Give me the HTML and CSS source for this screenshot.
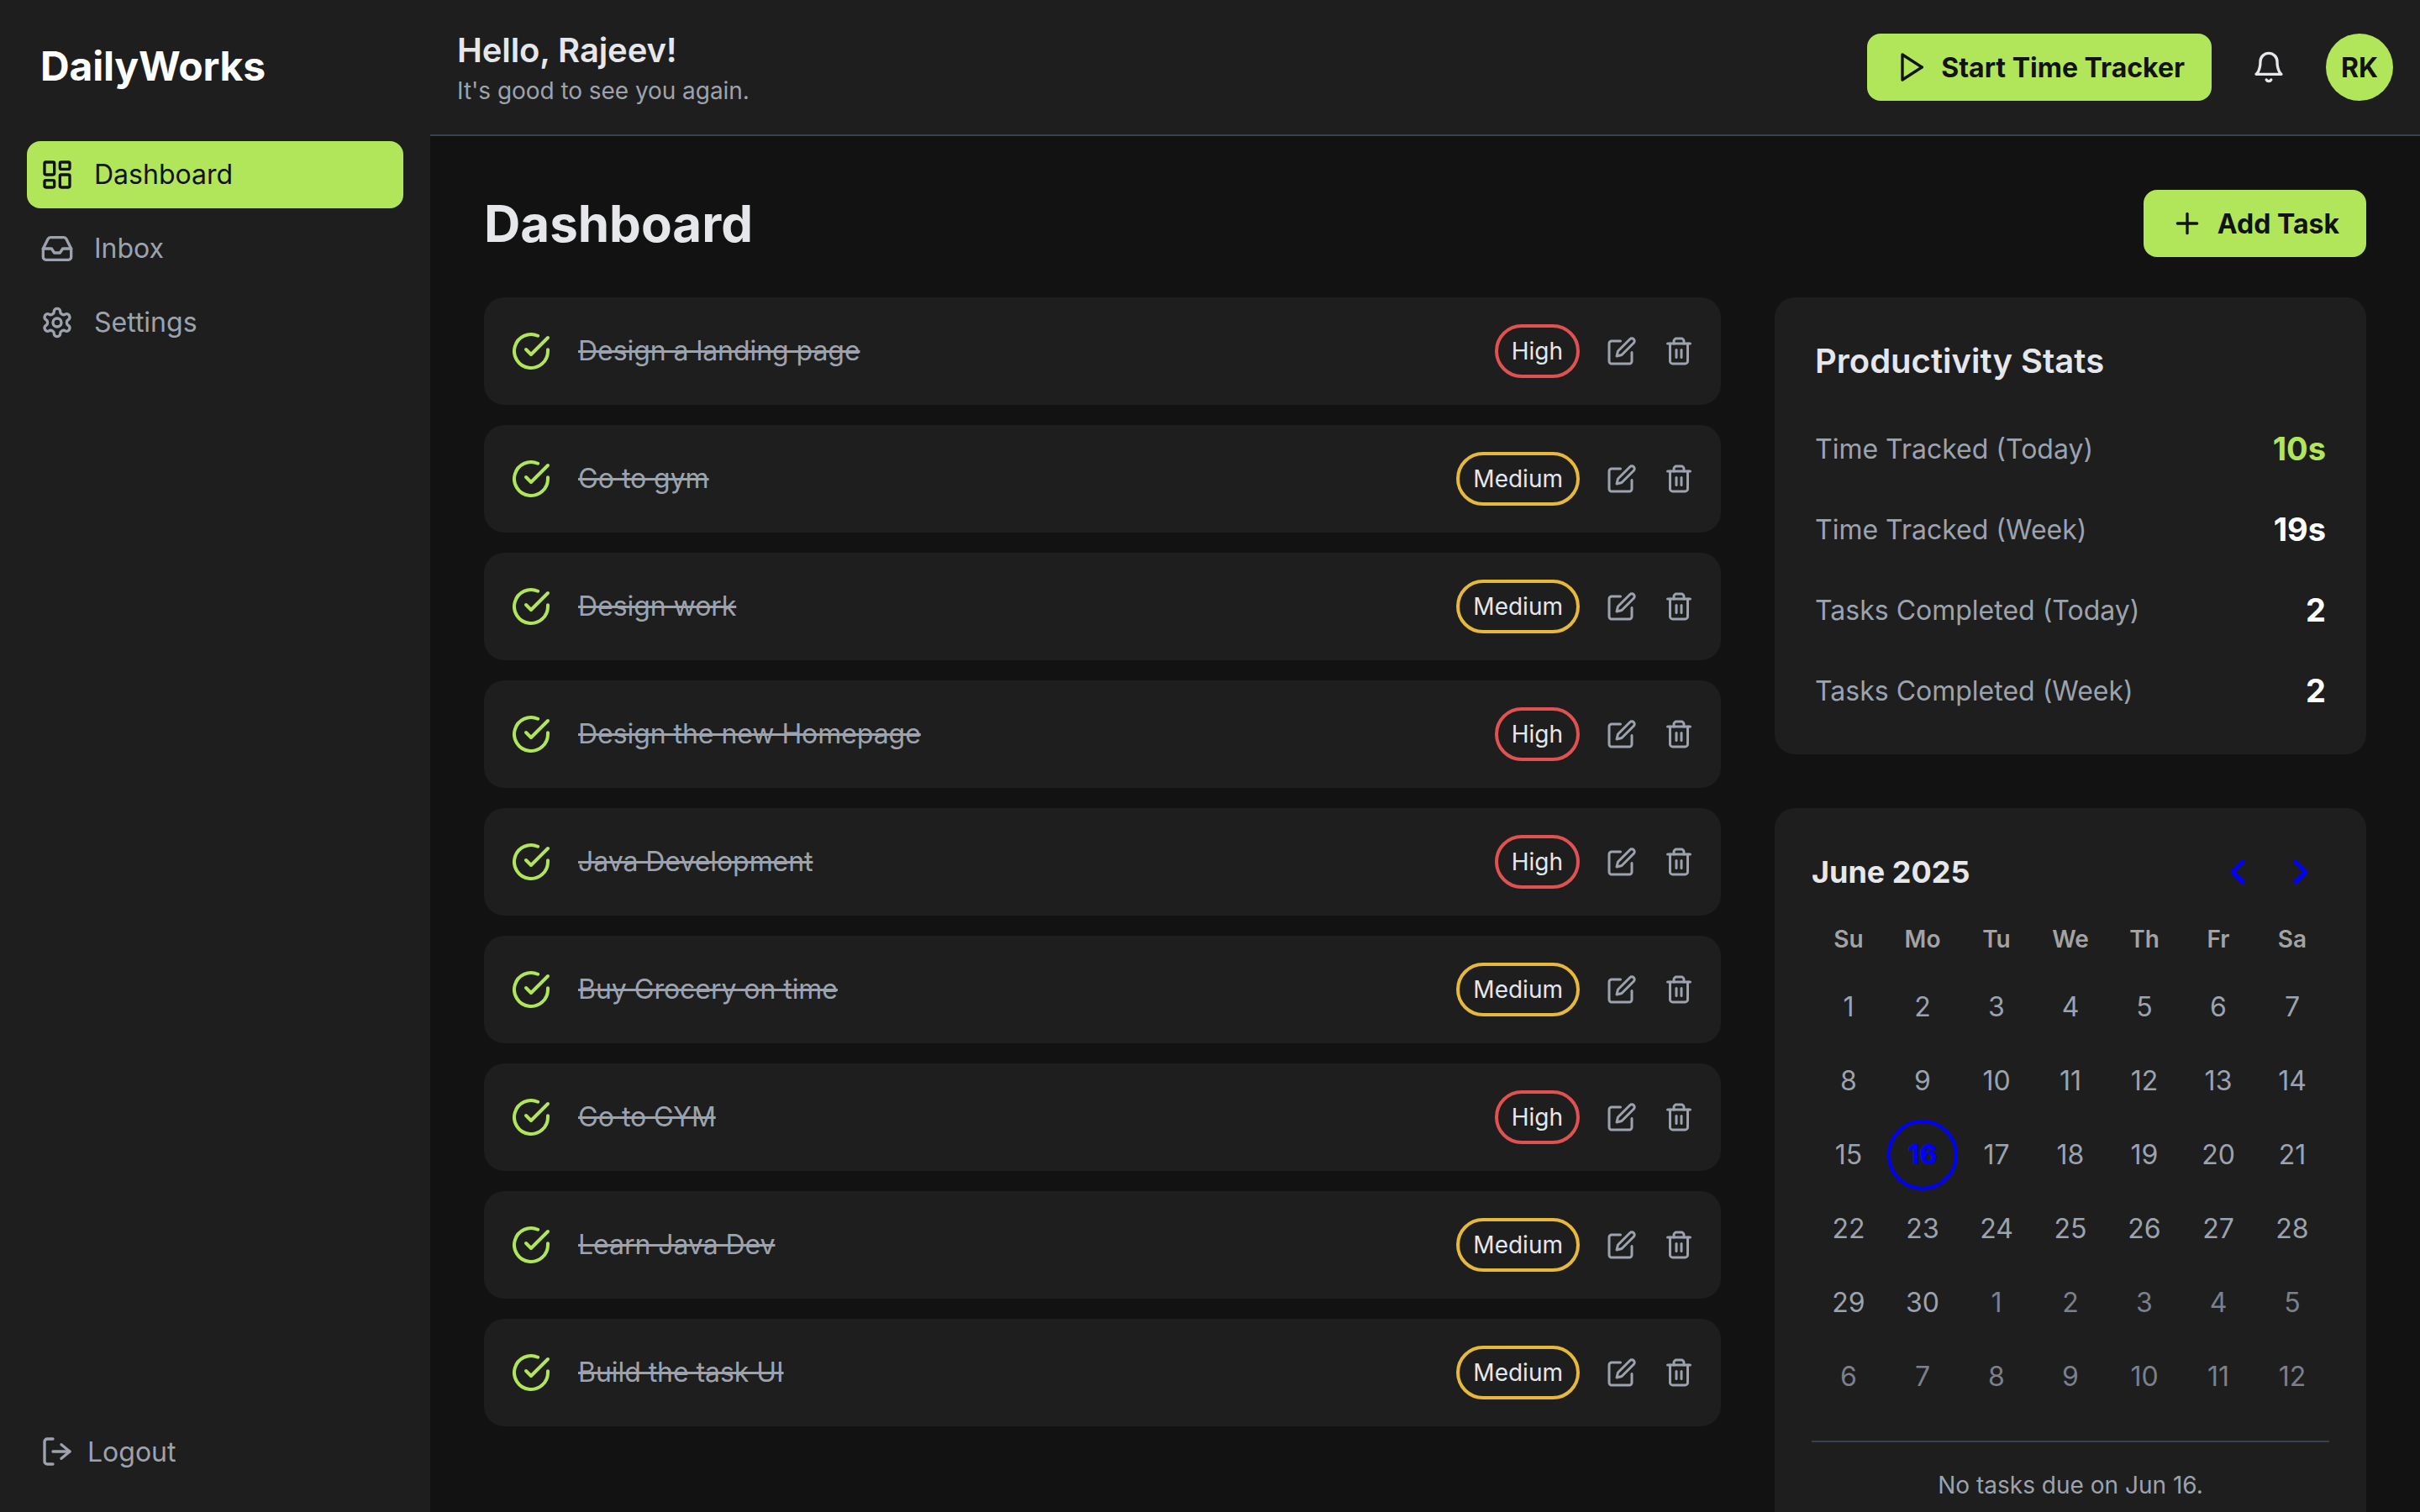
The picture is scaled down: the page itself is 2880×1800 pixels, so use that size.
FILE: index.html
```html
<!DOCTYPE html>
<html lang="en">
<head>
    <meta charset="UTF-8">
    <meta name="viewport" content="width=device-width, initial-scale=1.0">
    <title>DailyWorks</title>
    <link rel="stylesheet" href="styles.css">
</head>
<body>
    <!-- Icon sprite -->
    <svg class="sprite" xmlns="http://www.w3.org/2000/svg">
        <symbol id="i-dashboard" viewBox="0 0 24 24"><rect x="3" y="3" width="7" height="9" rx="1"/><rect x="14" y="3" width="7" height="5" rx="1"/><rect x="14" y="12" width="7" height="9" rx="1"/><rect x="3" y="16" width="7" height="5" rx="1"/></symbol>
        <symbol id="i-inbox" viewBox="0 0 24 24"><polyline points="22 12 16 12 14 15 10 15 8 12 2 12"/><path d="M5.45 5.11 2 12v6a2 2 0 0 0 2 2h16a2 2 0 0 0 2-2v-6l-3.45-6.89A2 2 0 0 0 16.76 4H7.24a2 2 0 0 0-1.79 1.11z"/></symbol>
        <symbol id="i-settings" viewBox="0 0 24 24"><path d="M12.22 2h-.44a2 2 0 0 0-2 2v.18a2 2 0 0 1-1 1.73l-.43.25a2 2 0 0 1-2 0l-.15-.08a2 2 0 0 0-2.73.73l-.22.38a2 2 0 0 0 .73 2.73l.15.1a2 2 0 0 1 1 1.72v.51a2 2 0 0 1-1 1.74l-.15.09a2 2 0 0 0-.73 2.73l.22.38a2 2 0 0 0 2.73.73l.15-.08a2 2 0 0 1 2 0l.43.25a2 2 0 0 1 1 1.73V20a2 2 0 0 0 2 2h.44a2 2 0 0 0 2-2v-.18a2 2 0 0 1 1-1.73l.43-.25a2 2 0 0 1 2 0l.15.08a2 2 0 0 0 2.73-.73l.22-.39a2 2 0 0 0-.73-2.73l-.15-.08a2 2 0 0 1-1-1.74v-.5a2 2 0 0 1 1-1.74l.15-.09a2 2 0 0 0 .73-2.73l-.22-.38a2 2 0 0 0-2.73-.73l-.15.08a2 2 0 0 1-2 0l-.43-.25a2 2 0 0 1-1-1.73V4a2 2 0 0 0-2-2z"/><circle cx="12" cy="12" r="3"/></symbol>
        <symbol id="i-logout" viewBox="0 0 24 24"><path d="M9 21H5a2 2 0 0 1-2-2V5a2 2 0 0 1 2-2h4"/><polyline points="14 17 20 12 14 7" transform="translate(1 0)"/><line x1="21" y1="12" x2="9" y2="12"/></symbol>
        <symbol id="i-play" viewBox="0 0 24 24"><polygon points="6 3 20 12 6 21 6 3"/></symbol>
        <symbol id="i-bell" viewBox="0 0 24 24"><path d="M6 8a6 6 0 0 1 12 0c0 7 3 9 3 9H3s3-2 3-9"/><path d="M10.3 21a1.94 1.94 0 0 0 3.4 0"/></symbol>
        <symbol id="i-plus" viewBox="0 0 24 24"><path d="M5 12h14"/><path d="M12 5v14"/></symbol>
        <symbol id="i-check" viewBox="0 0 24 24"><path d="M22 11.08V12a10 10 0 1 1-5.93-9.14"/><polyline points="22 4 12 14.01 9 11.01"/></symbol>
        <symbol id="i-edit" viewBox="0 0 24 24"><path d="M11 4H4a2 2 0 0 0-2 2v14a2 2 0 0 0 2 2h14a2 2 0 0 0 2-2v-7"/><path d="M18.5 2.5a2.121 2.121 0 0 1 3 3L12 15l-4 1 1-4 9.5-9.5z"/></symbol>
        <symbol id="i-trash" viewBox="0 0 24 24"><path d="M3 6h18"/><path d="M19 6v14c0 1-1 2-2 2H7c-1 0-2-1-2-2V6"/><path d="M8 6V4c0-1 1-2 2-2h4c1 0 2 1 2 2v2"/><line x1="10" y1="11" x2="10" y2="17"/><line x1="14" y1="11" x2="14" y2="17"/></symbol>
        <symbol id="i-prev" viewBox="0 0 24 24"><path d="m15 18-6-6 6-6"/></symbol>
        <symbol id="i-next" viewBox="0 0 24 24"><path d="m9 18 6-6-6-6"/></symbol>
    </svg>

    <div class="app">
        <aside class="sidebar">
            <div class="logo">DailyWorks</div>
            <nav class="nav">
                <a class="nav-item active"><svg class="icon"><use href="#i-dashboard"/></svg>Dashboard</a>
                <a class="nav-item"><svg class="icon"><use href="#i-inbox"/></svg>Inbox</a>
                <a class="nav-item"><svg class="icon"><use href="#i-settings"/></svg>Settings</a>
            </nav>
            <a class="logout"><svg class="icon"><use href="#i-logout"/></svg>Logout</a>
        </aside>

        <div class="content">
            <header class="topbar">
                <div class="greeting">
                    <div class="greeting-title">Hello, Rajeev!</div>
                    <div class="greeting-sub">It's good to see you again.</div>
                </div>
                <div class="topbar-actions">
                    <button class="btn btn-tracker"><svg class="icon"><use href="#i-play"/></svg>Start Time Tracker</button>
                    <svg class="icon bell"><use href="#i-bell"/></svg>
                    <div class="avatar">RK</div>
                </div>
            </header>

            <main class="main">
                <div class="page-head">
                    <h1>Dashboard</h1>
                    <button class="btn btn-add"><svg class="icon"><use href="#i-plus"/></svg>Add Task</button>
                </div>

                <div class="columns">
                    <div class="task-list">
                        <div class="task">
                            <svg class="icon check"><use href="#i-check"/></svg>
                            <span class="task-name">Design a landing page</span>
                            <span class="pill high">High</span>
                            <svg class="icon action"><use href="#i-edit"/></svg>
                            <svg class="icon action"><use href="#i-trash"/></svg>
                        </div>
                        <div class="task">
                            <svg class="icon check"><use href="#i-check"/></svg>
                            <span class="task-name">Go to gym</span>
                            <span class="pill medium">Medium</span>
                            <svg class="icon action"><use href="#i-edit"/></svg>
                            <svg class="icon action"><use href="#i-trash"/></svg>
                        </div>
                        <div class="task">
                            <svg class="icon check"><use href="#i-check"/></svg>
                            <span class="task-name">Design work</span>
                            <span class="pill medium">Medium</span>
                            <svg class="icon action"><use href="#i-edit"/></svg>
                            <svg class="icon action"><use href="#i-trash"/></svg>
                        </div>
                        <div class="task">
                            <svg class="icon check"><use href="#i-check"/></svg>
                            <span class="task-name">Design the new Homepage</span>
                            <span class="pill high">High</span>
                            <svg class="icon action"><use href="#i-edit"/></svg>
                            <svg class="icon action"><use href="#i-trash"/></svg>
                        </div>
                        <div class="task">
                            <svg class="icon check"><use href="#i-check"/></svg>
                            <span class="task-name">Java Development</span>
                            <span class="pill high">High</span>
                            <svg class="icon action"><use href="#i-edit"/></svg>
                            <svg class="icon action"><use href="#i-trash"/></svg>
                        </div>
                        <div class="task">
                            <svg class="icon check"><use href="#i-check"/></svg>
                            <span class="task-name">Buy Grocery on time</span>
                            <span class="pill medium">Medium</span>
                            <svg class="icon action"><use href="#i-edit"/></svg>
                            <svg class="icon action"><use href="#i-trash"/></svg>
                        </div>
                        <div class="task">
                            <svg class="icon check"><use href="#i-check"/></svg>
                            <span class="task-name">Go to GYM</span>
                            <span class="pill high">High</span>
                            <svg class="icon action"><use href="#i-edit"/></svg>
                            <svg class="icon action"><use href="#i-trash"/></svg>
                        </div>
                        <div class="task">
                            <svg class="icon check"><use href="#i-check"/></svg>
                            <span class="task-name">Learn Java Dev</span>
                            <span class="pill medium">Medium</span>
                            <svg class="icon action"><use href="#i-edit"/></svg>
                            <svg class="icon action"><use href="#i-trash"/></svg>
                        </div>
                        <div class="task">
                            <svg class="icon check"><use href="#i-check"/></svg>
                            <span class="task-name">Build the task UI</span>
                            <span class="pill medium">Medium</span>
                            <svg class="icon action"><use href="#i-edit"/></svg>
                            <svg class="icon action"><use href="#i-trash"/></svg>
                        </div>
                    </div>

                    <div class="side-col">
                        <section class="card stats">
                            <h2>Productivity Stats</h2>
                            <div class="stat"><span>Time Tracked (Today)</span><b class="accent">10s</b></div>
                            <div class="stat"><span>Time Tracked (Week)</span><b>19s</b></div>
                            <div class="stat"><span>Tasks Completed (Today)</span><b>2</b></div>
                            <div class="stat"><span>Tasks Completed (Week)</span><b>2</b></div>
                        </section>

                        <section class="card calendar">
                            <div class="cal-head">
                                <div class="cal-title">June 2025</div>
                                <div class="cal-nav">
                                    <svg class="icon"><use href="#i-prev"/></svg>
                                    <svg class="icon"><use href="#i-next"/></svg>
                                </div>
                            </div>
                            <div class="cal-grid cal-weekdays">
                                <div>Su</div><div>Mo</div><div>Tu</div><div>We</div><div>Th</div><div>Fr</div><div>Sa</div>
                            </div>
                            <div class="cal-grid cal-days">
                                <div>1</div><div>2</div><div>3</div><div>4</div><div>5</div><div>6</div><div>7</div>
                                <div>8</div><div>9</div><div>10</div><div>11</div><div>12</div><div>13</div><div>14</div>
                                <div>15</div><div class="today"><span>16</span></div><div>17</div><div>18</div><div>19</div><div>20</div><div>21</div>
                                <div>22</div><div>23</div><div>24</div><div>25</div><div>26</div><div>27</div><div>28</div>
                                <div>29</div><div>30</div><div class="off">1</div><div class="off">2</div><div class="off">3</div><div class="off">4</div><div class="off">5</div>
                                <div class="off">6</div><div class="off">7</div><div class="off">8</div><div class="off">9</div><div class="off">10</div><div class="off">11</div><div class="off">12</div>
                            </div>
                            <div class="cal-note">No tasks due on Jun 16.</div>
                        </section>
                    </div>
                </div>
            </main>
        </div>
    </div>
</body>
</html>
```

FILE: styles.css
```css
* {
    box-sizing: border-box;
}
html, body {
    height: 100%;
}
body {
    margin: 0;
    overflow: hidden;
    font-family: Inter, "Liberation Sans", sans-serif;
    background: #121212;
    color: #e5e7eb;
}
.sprite {
    display: none;
}
.icon {
    width: 40px;
    height: 40px;
    flex-shrink: 0;
    fill: none;
    stroke: currentColor;
    stroke-width: 2;
    stroke-linecap: round;
    stroke-linejoin: round;
}
.app {
    display: flex;
    height: 1800px;
}

/* Sidebar */
.sidebar {
    width: 512px;
    flex-shrink: 0;
    display: flex;
    flex-direction: column;
    padding: 50px 32px 32px;
    background: #1e1e1e;
}
.logo {
    height: 58px;
    line-height: 58px;
    padding-left: 16px;
    margin-bottom: 60px;
    font-size: 48px;
    font-weight: 700;
    letter-spacing: -0.2px;
    color: #fff;
}
.nav {
    display: flex;
    flex-direction: column;
    gap: 8px;
    flex: 1;
}
.nav-item {
    display: flex;
    align-items: center;
    gap: 24px;
    height: 80px;
    padding: 0 16px 1px;
    border-radius: 16px;
    font-size: 32px;
    font-weight: 400;
    color: #9ca3af;
}
.nav-item.active {
    background: #b2e65a;
    color: #121212;
}
.logout {
    display: flex;
    align-items: center;
    gap: 16px;
    height: 80px;
    padding: 0 16px;
    font-size: 32px;
    font-weight: 400;
    color: #9ca3af;
}

/* Top bar */
.content {
    flex: 1;
    min-width: 0;
    display: flex;
    flex-direction: column;
}
.topbar {
    height: 162px;
    flex-shrink: 0;
    display: flex;
    align-items: center;
    justify-content: space-between;
    padding: 0 32px;
    background: #1e1e1e;
    border-bottom: 2px solid #374151;
}
.greeting-title {
    font-size: 40px;
    line-height: 56px;
    font-weight: 600;
    letter-spacing: -0.1px;
    color: #e5e7eb;
}
.greeting-sub {
    font-size: 28px;
    line-height: 40px;
    letter-spacing: -0.05px;
    color: #9ca3af;
}
.topbar-actions {
    display: flex;
    align-items: center;
    gap: 48px;
}
.btn {
    display: flex;
    align-items: center;
    gap: 16px;
    height: 80px;
    padding: 0 32px;
    border: none;
    border-radius: 16px;
    background: #b2e65a;
    color: #121212;
    font-family: inherit;
    font-size: 32px;
    font-weight: 700;
}
.bell {
    color: #e5e7eb;
}
.avatar {
    width: 80px;
    height: 80px;
    border-radius: 50%;
    display: flex;
    align-items: center;
    justify-content: center;
    background: #b2e65a;
    color: #121212;
    font-size: 32px;
    font-weight: 700;
}

/* Main */
.main {
    flex: 1;
    padding: 64px;
}
.page-head {
    display: flex;
    align-items: center;
    justify-content: space-between;
    height: 80px;
    margin-bottom: 48px;
}
h1 {
    margin: 0;
    font-size: 60px;
    font-weight: 700;
    color: #e5e7eb;
}
.columns {
    display: grid;
    grid-template-columns: repeat(3, 1fr);
    gap: 64px;
    align-items: start;
}
.task-list {
    grid-column: span 2;
    display: flex;
    flex-direction: column;
    gap: 24px;
}
.task {
    display: flex;
    align-items: center;
    height: 128px;
    padding: 0 32px;
    border-radius: 24px;
    background: #1e1e1e;
}
.check {
    width: 48px;
    height: 48px;
    color: #b2e65a;
}
.task-name {
    flex: 1;
    margin-left: 32px;
    margin-bottom: 2px;
    font-size: 32px;
    letter-spacing: -0.05px;
    color: #9ca3af;
    text-decoration: line-through;
}
.pill {
    height: 64px;
    line-height: 56px;
    padding: 0 16px;
    border: 4px solid;
    border-radius: 32px;
    font-size: 28px;
    color: #e5e7eb;
}
.pill.high {
    border-color: #e05252;
}
.pill.medium {
    border-color: #e6b93c;
}
.action {
    width: 36px;
    height: 36px;
    margin-left: 32px;
    color: #9ca3af;
}

/* Right column */
.side-col {
    display: flex;
    flex-direction: column;
    gap: 64px;
}
.card {
    border-radius: 24px;
    background: #1e1e1e;
}
.stats {
    padding: 48px;
}
h2 {
    margin: 0 0 48px;
    font-size: 40px;
    line-height: 56px;
    font-weight: 600;
    color: #e5e7eb;
}
.stat {
    display: flex;
    align-items: center;
    justify-content: space-between;
    height: 56px;
    margin-top: 40px;
    font-size: 32px;
    color: #9ca3af;
}
.stat b {
    font-size: 38px;
    font-weight: 700;
    color: #fff;
}
.stat b.accent {
    color: #b2e65a;
}
.calendar {
    padding: 44px;
}
.cal-head {
    display: flex;
    align-items: center;
    justify-content: space-between;
    height: 64px;
    margin-bottom: 12px;
}
.cal-title {
    font-size: 36px;
    font-weight: 700;
    color: #e5e7eb;
}
.cal-nav {
    display: flex;
    gap: 27px;
    padding-right: 10px;
    color: #0000ff;
}
.cal-nav .icon {
    width: 48px;
    height: 48px;
    stroke-width: 2.5;
}
.cal-grid {
    display: grid;
    grid-template-columns: repeat(7, 88px);
    text-align: center;
}
.cal-weekdays > div {
    height: 73px;
    line-height: 72px;
    font-size: 28px;
    font-weight: 600;
    color: #a3a3a3;
}
.cal-days > div {
    height: 88px;
    line-height: 87px;
    font-size: 32px;
    color: #9ca3af;
}
.cal-days > .off {
    color: #7b808c;
}
.cal-days > .today {
    display: flex;
    align-items: center;
    justify-content: center;
}
.today span {
    width: 84px;
    height: 84px;
    line-height: 76px;
    border: 4px solid #0000ff;
    border-radius: 50%;
    font-weight: 800;
    color: #0000ff;
}
.cal-note {
    margin-top: 32px;
    padding-top: 34px;
    border-top: 2px solid #374151;
    text-align: center;
    font-size: 28px;
    color: #9ca3af;
}
```
